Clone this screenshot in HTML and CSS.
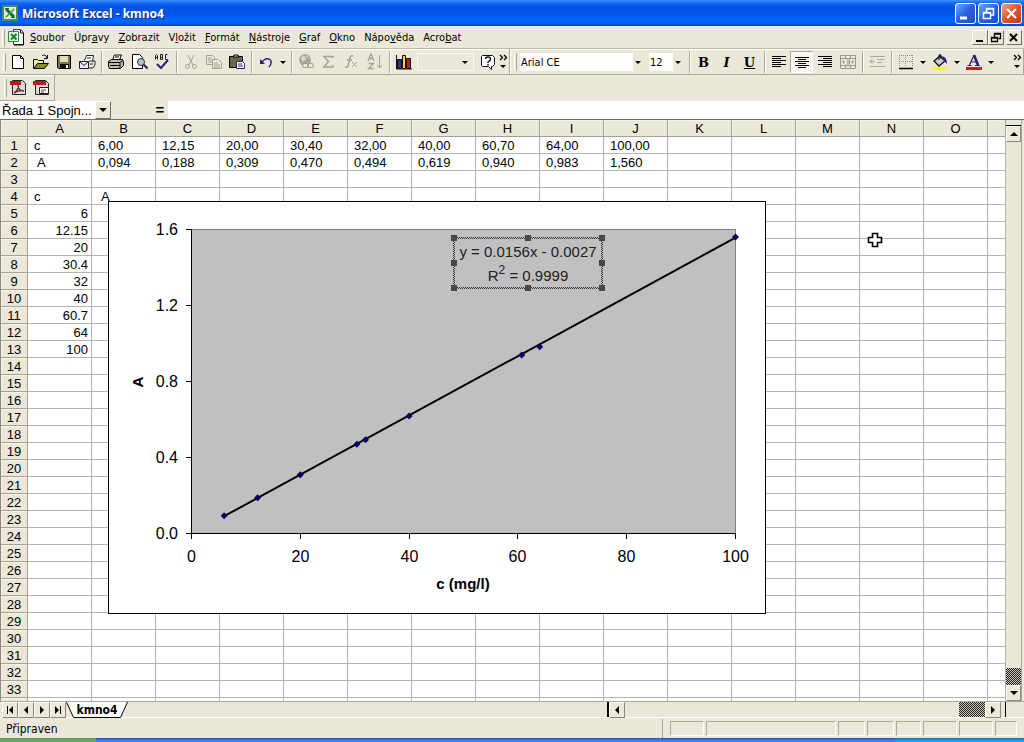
FILE: index.html
```
<!DOCTYPE html>
<html lang="cs">
<head>
<meta charset="utf-8">
<title>Microsoft Excel - kmno4</title>
<link rel="stylesheet" href="styles.css">
</head>
<body>
<header class="titlebar">
  <svg class="app-icon" width="16" height="16" viewBox="0 0 16 16"><path d="M1 1h14v14H1z" fill="#dff0d8" stroke="#4d8a5a" stroke-width="2"/><path d="M4 4l8 8" stroke="#16702c" stroke-width="3"/><path d="M12 4l-8 8" stroke="#3f9350" stroke-width="1.600"/><path d="M3 3.500h4M9 12.500h4" stroke="#16702c"/></svg>
  <h1>Microsoft Excel - kmno4</h1>
  <div class="win-buttons">
    <button class="win" aria-label="Minimize"><svg width="19" height="19"><path d="M4 14h7" stroke="#fff" stroke-width="3"/></svg></button>
    <button class="win" aria-label="Restore"><svg width="19" height="19"><path d="M7.500 8V4.500h7v6.500h-3M7 5h8M4.500 8.500h7v6h-7zM4 9h8" fill="none" stroke="#fff" stroke-width="1.500"/></svg></button>
    <button class="win close" aria-label="Close"><svg width="19" height="19"><path d="M5 5l9 9M14 5l-9 9" stroke="#fff" stroke-width="2.200"/></svg></button>
  </div>
</header>

<nav class="menubar">
  <span class="grip"></span>
  <svg class="doc-icon" width="17" height="17" viewBox="0 0 17 17"><path d="M5.500 .5h7l3 3v12h-10z" fill="#fff" stroke="#333"/><path d="M12.500 1v3h3M15.500 4v12H6" stroke="#000" fill="none"/><path d="M.5 2.500h10v10H.5z" fill="#e4f4df" stroke="#2b8a3a"/><path d="M3 5l5.500 5.500M8.500 5L3 10.500" stroke="#14802b" stroke-width="2"/></svg>
  <button><u>S</u>oubor</button>
  <button>Úpr<u>a</u>vy</button>
  <button><u>Z</u>obrazit</button>
  <button>V<u>l</u>ožit</button>
  <button><u>F</u>ormát</button>
  <button><u>N</u>ástroje</button>
  <button><u>G</u>raf</button>
  <button><u>O</u>kno</button>
  <button>Nápo<u>v</u>ěda</button>
  <button>Acro<u>b</u>at</button>
  <div class="doc-buttons">
    <button class="raised" aria-label="Minimize workbook"><svg width="12" height="11"><path d="M2 9h7" stroke="#000" stroke-width="2"/></svg></button>
    <button class="raised" aria-label="Restore workbook"><svg width="12" height="11"><path d="M4.500 5V1.500h6v5h-2M4 2h7M1.500 5.500h6v4h-6zM1 6h7" fill="none" stroke="#000" stroke-width="1.300"/></svg></button>
    <button class="raised gap" aria-label="Close workbook"><svg width="12" height="11"><path d="M2 2l7 7M9 2l-7 7" stroke="#000" stroke-width="2"/></svg></button>
  </div>
</nav>

<div class="toolbars">
  <div class="toolbar standard">
    <span class="grip"></span>
    <button class="tool" aria-label="New"><svg width="18" height="18"><path d="M3.500 2.500h8l3 3v10h-11z" fill="#fff" stroke="#000"/><path d="M11.500 2.500v3h3" fill="none" stroke="#000"/></svg></button>
    <button class="tool" aria-label="Open"><svg width="18" height="18"><path d="M1.500 15V6.500h4l1 1h5v3" fill="#f5ef8e" stroke="#000"/><path d="M1.500 15.500l4-5h11l-4 5z" fill="#8c8c1c" stroke="#000"/><path d="M10 3c2-2 4-1 5 2M15.500 2v3.500H12" fill="none" stroke="#000"/></svg></button>
    <button class="tool" aria-label="Save"><svg width="18" height="18"><path d="M2.500 2.500h13v13h-12l-1-1z" fill="#7b7b30" stroke="#000"/><path d="M5 3h8v6H5z" fill="#dedec8"/><path d="M5 11h9v4H5z" fill="#111"/><path d="M11 12h2v3h-2z" fill="#fff"/></svg></button>
    <button class="tool" aria-label="Send"><svg width="18" height="18"><path d="M6.500 7.500l2-5h7l-1 6" fill="#fff" stroke="#223"/><path d="M1.500 8.500h9v7h-9z" fill="#e8edf6" stroke="#223"/><path d="M1.500 8.500l4.500 4 4.500-4M11 15h4l2-3V8h-6M12 11h3M9 5h4" fill="none" stroke="#223"/></svg></button>
    <span class="sep"></span>
    <button class="tool" aria-label="Print"><svg width="18" height="18"><path d="M5.500 7l2-5h7l-2 5" fill="#fff" stroke="#000"/><path d="M1.500 8.500l3-2h11l1 2v4l-3 3h-11l-1-2z" fill="#bcbcaa" stroke="#000"/><path d="M2 9.500h11l3-2M13 10v5M3 12.500h10M8 4h4" fill="none" stroke="#000"/><path d="M9 11h3" stroke="#dd0"/></svg></button>
    <button class="tool" aria-label="Print preview"><svg width="18" height="18"><path d="M2.500 1.500h7l3 3v11h-10z" fill="#fff" stroke="#000"/><circle cx="11" cy="9" r="3.500" fill="#a9c4ce" stroke="#333"/><path d="M13.500 11.500l4 4" stroke="#225" stroke-width="2"/></svg></button>
    <button class="tool" aria-label="Spelling"><svg width="18" height="18"><path d="M2.500 6.500V2.500l1-1 1 1v4M2.500 4.500h2M7.500 1.500v5h2v-2h-2 2v-3h-2M14.500 1.500h-2v5h2" fill="none" stroke="#222"/><path d="M4 11l4 4 7-8" fill="none" stroke="#24248c" stroke-width="2"/></svg></button>
    <span class="sep"></span>
    <button class="tool" aria-label="Cut"><svg width="18" height="18" fill="none" stroke="#a5a193"><path d="M6 2l5 10M12 2L7 12"/><circle cx="5.500" cy="13.500" r="2"/><circle cx="12.500" cy="13.500" r="2"/></svg></button>
    <button class="tool" aria-label="Copy"><svg width="18" height="18" fill="#ece8d9" stroke="#a5a193"><path d="M1.500 2.500h6l2 2v7h-8zM3 5h4M3 7h5M3 9h5"/><path d="M7.500 6.500h6l3 3v6h-9zM9 10h4M9 12h6M9 14h6"/></svg></button>
    <button class="tool" aria-label="Paste"><svg width="18" height="18"><path d="M1.500 3.500h13v11h-13z" fill="#6b6848" stroke="#000"/><path d="M5 4l1-2h4l1 2z" fill="#dd8" stroke="#000"/><path d="M8.500 8.500h6l2 2v5h-8z" fill="#fff" stroke="#22227a"/><path d="M10 11h4M10 13h5" stroke="#22227a"/></svg></button>
    <span class="sep"></span>
    <button class="tool" aria-label="Undo"><svg width="18" height="18"><path d="M4 10l3-3c4-3 8 0 7 3q0 2-2 4" fill="none" stroke="#20207a" stroke-width="1.400"/><path d="M3 6v5h5z" fill="#20207a"/></svg></button>
    <button class="drop" aria-label="Undo list"></button>
    <span class="sep"></span>
    <button class="tool" aria-label="Insert link"><svg width="18" height="18"><circle cx="8" cy="7" r="6" fill="#aaa698"/><path d="M4 5l3-2 2 3-3 2zM9 3l3 2" fill="#dad6c8" stroke="#dad6c8"/><rect x="5.500" y="10.500" width="6" height="4" rx="2" fill="#ece8d9" stroke="#999587"/><rect x="10.500" y="10.500" width="6" height="4" rx="2" fill="none" stroke="#999587"/></svg></button>
    <button class="tool" aria-label="AutoSum"><svg width="18" height="18"><path d="M13 5V3.500H4l4.500 5L4 14h9v-2" fill="none" stroke="#a5a193" stroke-width="1.500"/></svg></button>
    <button class="tool" aria-label="Function"><svg width="18" height="18" fill="none" stroke="#a5a193"><path d="M10 3c-3-1-3 2-4 6s-1 6-4 5M4 7h5" stroke-width="1.500"/><path d="M9 9l5 5M14 9l-5 5"/></svg></button>
    <button class="tool" aria-label="Sort"><svg width="18" height="18" fill="none" stroke="#a5a193"><path d="M2 8l3-7 3 7M3 5.500h4M2.500 10.500h5l-5 5h5" stroke-width="1.300"/><path d="M13.500 2v13M11 12l2.500 3 2.500-3"/></svg></button>
    <span class="sep"></span>
    <button class="tool pale" aria-label="Chart wizard"><svg width="18" height="18"><path d="M1.500 2v14H17" fill="none" stroke="#111"/><path d="M2.500 6.500h4v9h-4z" fill="#30308f" stroke="#111"/><path d="M7.500 2.500h3v13h-3z" fill="#f4d53f" stroke="#111"/><path d="M11.500 5.500h4v10h-4z" fill="#b52220" stroke="#111"/></svg></button>
    <label class="combo zoom-box"><select aria-label="Zoom"><option></option></select></label>
    <button class="tool" aria-label="Help"><svg width="18" height="18"><path d="M3.500 2.500h10l2 2v7l-2 2h-1v3l-3-3h-6l-1-1v-9z" fill="#fff" stroke="#111"/><path d="M6.500 6q0-2 2.500-2t2.500 2-2.500 3v1M9 11v1.500" fill="none" stroke="#111" stroke-width="1.400"/></svg></button>
    <button class="more" aria-label="More buttons"><svg width="9" height="18" fill="none" stroke="#000"><path d="M1 2l2.500 2.500L1 7M5 2l2.500 2.500L5 7" stroke-width="1.300"/><path d="M1 12h6l-3 3z" fill="#000" stroke="none"/></svg></button>
  </div>
  <div class="toolbar formatting">
    <span class="grip"></span>
    <label class="combo font-box"><select aria-label="Font"><option>Arial CE</option></select></label>
    <label class="combo size-box"><select aria-label="Font size"><option>12</option></select></label>
    <span class="sep"></span>
    <button class="tool letter"><b>B</b></button>
    <button class="tool letter"><i>I</i></button>
    <button class="tool letter"><u>U</u></button>
    <span class="sep"></span>
    <button class="tool" aria-label="Align left"><svg width="16" height="16" stroke="#000"><path d="M1 2.500h14M1 4.500h9M1 6.500h14M1 8.500h9M1 10.500h14M1 12.500h9"/></svg></button>
    <button class="tool pressed" aria-label="Center"><svg width="16" height="16" stroke="#000"><path d="M1 3.500h14M4 5.500h8M1 7.500h14M4 9.500h8M1 11.500h14M4 13.500h8"/></svg></button>
    <button class="tool" aria-label="Align right"><svg width="16" height="16" stroke="#000"><path d="M1 2.500h14M6 4.500h9M1 6.500h14M6 8.500h9M1 10.500h14M6 12.500h9"/></svg></button>
    <button class="tool" aria-label="Merge and center"><svg width="16" height="16" fill="none" stroke="#9b978a"><path d="M.5 1.500h15v13H.5zM.5 4.500h15M.5 11.500h15M5.500 1.500v3M10.500 1.500v3M5.500 11.500v3M10.500 11.500v3M2 8h3M11 8h3M3.500 6.500v3M12.500 6.500v3M6.500 6h3v4h-3M7 8h2"/></svg></button>
    <span class="sep"></span>
    <button class="tool" aria-label="Decrease indent"><svg width="16" height="16" fill="none" stroke="#aaa698"><path d="M1 2.500h15M8 5.500h7M8 8.500h5M1 12.500h15M1 7.500h5M3.500 5L1 7.500 3.500 10"/></svg></button>
    <span class="sep"></span>
    <button class="tool" aria-label="Borders"><svg width="16" height="16" fill="none" stroke="#8e8b80"><path d="M1 1.500h14M1 7.500h14M1.500 1v12M7.500 1v12M14.500 1v12" stroke-dasharray="1 1"/><path d="M1 14.500h14" stroke="#000" stroke-width="1.500"/></svg></button>
    <button class="drop" aria-label="Border styles"></button>
    <button class="tool" aria-label="Fill colour"><svg width="18" height="18"><path d="M3 8l6-5 5 5-6 5z" fill="#c8ccd8" stroke="#111" stroke-width="1.300"/><path d="M8 7V2q0-1 2 0v4" fill="none" stroke="#111"/><path d="M11 3q5 1 5 8l-3-3z" fill="#26268a"/><path d="M1 14h16v3H1z" fill="#ff0"/></svg></button>
    <button class="drop" aria-label="Fill colours"></button>
    <button class="tool" aria-label="Font colour"><svg width="18" height="18"><path d="M4.500 12L9 2M6 9h5M2.500 12.500h4M10 12.500h5" fill="none" stroke="#24246e" stroke-width="1.200"/><path d="M9 2l4 10" stroke="#24246e" stroke-width="2.600"/><path d="M1 14h16v3H1z" fill="#dc1420"/></svg></button>
    <button class="drop" aria-label="Font colours"></button>
    <button class="more end" aria-label="More formatting buttons"><svg width="9" height="18" fill="none" stroke="#000"><path d="M1 2l2.500 2.500L1 7M5 2l2.500 2.500L5 7" stroke-width="1.300"/><path d="M1 12h6l-3 3z" fill="#000" stroke="none"/></svg></button>
  </div>
</div>

<div class="acrobat-row">
  <div class="toolbar acrobat">
    <span class="grip"></span>
    <button class="tool" aria-label="Convert to PDF"><svg width="17" height="17"><path d="M2.500 1.500h10l3 3v11h-13z" fill="#ddd9d4" stroke="#222"/><path d="M0 2h11v4H0z" fill="#c01722"/><path d="M4 14c4-3 5-6 4-8 0 4 3 6 6 6-4-1-7 0-10 2" fill="none" stroke="#52252a" stroke-width="1.300"/></svg></button>
    <button class="tool" aria-label="Convert and mail"><svg width="17" height="17"><path d="M2.500 1.500h10l3 3v11h-13z" fill="#ddd9d4" stroke="#222"/><path d="M0 2h13v4H0z" fill="#c01722"/><path d="M6.500 8.500h9v6h-9z" fill="#fff" stroke="#222"/><path d="M8 11h5M8 13h3" stroke="#a22"/></svg></button>
  </div>
</div>

<div class="formula-bar">
  <input class="name-box" aria-label="Name box" value="Řada 1 Spojn...">
  <button class="name-drop" aria-label="Names"></button>
  <button class="equals">=</button>
  <input class="formula" aria-label="Formula">
</div>

<main class="workbook">
  <div class="sheet">
    <table class="cells" id="cells"></table>
    <svg class="chart" id="chart" viewBox="108 201 658 413" role="img" aria-label="A / c (mg/l)">
      <defs>
        <pattern id="hatch" width="2" height="2" patternUnits="userSpaceOnUse"><path d="M0 0h1v1H0zM1 1h1v1H1z" fill="#333"/></pattern>
      </defs>
      <rect x="108.500" y="201.500" width="657" height="412" fill="#fff" stroke="#000"/>
      <rect x="191.500" y="229.500" width="544" height="304" fill="#c0c0c0" stroke="#808080"/>
      <path d="M191.500 229v305M191 533.500h545" stroke="#000"/>
      <g id="ticks"></g>
      <g id="series"></g>
      <text class="axis-title" x="463" y="589">c (mg/l)</text>
      <text class="axis-title" transform="translate(143 382) rotate(-90)">A</text>
      <path d="M453 237h150v52H453zM455 239v48h146v-48z" fill="url(#hatch)" fill-rule="evenodd"/>
      <path d="M451 235h6v6h-6zM525 235h6v6h-6zM599 235h6v6h-6zM451 260h6v6h-6zM599 260h6v6h-6zM451 285h6v6h-6zM525 285h6v6h-6zM599 285h6v6h-6z" fill="#484848"/>
      <text class="equation" x="528" y="257">y = 0.0156x - 0.0027</text>
      <text class="equation" x="528" y="281">R<tspan class="sup" dy="-7">2</tspan><tspan dy="7"> = 0.9999</tspan></text>
    </svg>
    <svg class="pointer" width="16" height="16"><path d="M5.500 1.500h5v4h4v5h-4v4h-5v-4h-4v-5h4z" fill="#fff" stroke="#000" stroke-width="1.600"/></svg>
  </div>
  <div class="vscroll">
    <span class="split"></span>
    <button class="arrow-btn" aria-label="Scroll up"><i class="up"></i></button>
    <span class="track"></span>
    <span class="thumb"></span>
    <button class="arrow-btn" aria-label="Scroll down"><i class="down"></i></button>
  </div>
</main>

<div class="tabbar">
  <button class="arrow-btn" aria-label="First sheet"><i class="bar"></i><i class="left"></i></button>
  <button class="arrow-btn" aria-label="Previous sheet"><i class="left"></i></button>
  <button class="arrow-btn" aria-label="Next sheet"><i class="right"></i></button>
  <button class="arrow-btn" aria-label="Last sheet"><i class="right"></i><i class="bar"></i></button>
  <button class="tab"><svg width="62" height="16"><path d="M0 0h62l-7 15.500H7z" fill="#fff"/><path d="M.5 0L7.500 15.500h47L61.500 0" fill="none" stroke="#000"/></svg><span>kmno4</span></button>
  <span class="tab-space"></span>
  <div class="hscroll">
    <button class="arrow-btn" aria-label="Scroll left"><i class="left"></i></button>
    <span class="track"></span>
    <span class="thumb"></span>
    <button class="arrow-btn" aria-label="Scroll right"><i class="right"></i></button>
  </div>
</div>

<footer class="statusbar">
  <span class="message">Připraven</span>
  <div class="panels"><span></span><span></span><span></span><span></span><span></span><span></span><span></span><span></span></div>
</footer>
<div class="taskbar"><span class="start"></span><span class="tasks"></span><span class="tray"></span></div>
<script src="script.js"></script>
</body>
</html>
```
FILE: styles.css
```
* { box-sizing: border-box; }

body {
  margin: 0;
  height: 100vh;
  display: flex;
  flex-direction: column;
  overflow: hidden;
  background: #ece8d9;
  color: #000;
  font: 11px "DejaVu Sans Condensed", "DejaVu Sans", sans-serif;
}

button, input, select {
  font: inherit;
  color: inherit;
  margin: 0;
  padding: 0;
  border: 0;
  background: none;
  border-radius: 0;
  outline: none;
}

svg { display: block; flex: none; }

/* Title bar */
.titlebar {
  flex: none;
  height: 26px;
  display: flex;
  align-items: center;
  padding: 0 2px 0 2px;
  background: linear-gradient(#3c94fb 0, #1668ec 3px, #0054e3 7px, #0056e8 14px, #0366fe 20px, #0262f8 23px, #0242c4 26px);
}
.titlebar h1 {
  flex: 1;
  margin: 0 0 0 4px;
  color: #fff;
  font: bold 12px "Noto Sans", sans-serif;
  text-shadow: 1px 1px 1px #0a2a80;
}
.win-buttons { display: flex; gap: 2px; }
.win {
  width: 21px;
  height: 21px;
  border: 1px solid #fff;
  border-radius: 3px;
  background: linear-gradient(135deg, #7da4f5, #2a5fdf 50%, #1c50cc);
}
.win.close { background: linear-gradient(135deg, #f0a088, #dd5530 50%, #c03a18); }

/* Menu */
.menubar {
  flex: none;
  height: 23px;
  display: flex;
  align-items: center;
  gap: 9px;
  padding: 1px 0 0 2px;
  border-bottom: 1px solid #bdb9a9;
}
.menubar .grip { margin-right: -6px; }
.doc-icon { margin-right: -4px; }
.menubar button { white-space: nowrap; }
.doc-buttons { display: flex; margin-left: auto; padding-right: 2px; }
.raised {
  width: 16px;
  height: 15px;
  padding-left: 1px;
  border: 1px solid;
  border-color: #fff #716f64 #716f64 #fff;
}
.raised.gap { margin-left: 2px; }

.grip { flex: none; width: 3px; height: 18px; border-right: 1px solid #aca899; border-left: 1px solid #fff; }

/* Toolbars */
.toolbars { flex: none; display: flex; height: 26px; }
.toolbar {
  display: flex;
  align-items: center;
  padding-top: 1px;
  border: solid #aca899;
  border-width: 0 1px 1px 0;
  box-shadow: inset 0 1px #fff;
}
.standard { flex: none; padding: 1px 1px 0 3px; }
.formatting { flex: 1; padding-left: 4px; box-shadow: inset 1px 1px #fff; }
.formatting .grip { margin-right: 3px; }
.tool {
  flex: none;
  width: 23px;
  height: 22px;
  display: flex;
  align-items: center;
  justify-content: center;
}
.tool.pressed { background: #f8f6f0; border: 1px solid; border-color: #aca899 #fff #fff #aca899; }
.letter { font: bold 13px "DejaVu Serif", serif; }
.sep { flex: none; width: 6px; height: 22px; background: linear-gradient(90deg, transparent 3px, #aca899 3px, #aca899 4px, #fff 4px, #fff 5px, transparent 5px); }
.drop { flex: none; width: 11px; height: 22px; display: flex; align-items: center; justify-content: center; }
.drop::after, .combo::after, .name-drop::after {
  content: "";
  border: 3px solid transparent;
  border-top-color: #000;
  border-bottom: 0;
}
.combo { flex: none; display: flex; align-items: center; height: 18px; background: #fff; }
.combo::after { margin-right: 5px; }
.combo select { flex: 1; min-width: 0; appearance: none; padding-left: 1px; }
.zoom-box { width: 57px; margin: 0 2px; background: none; border: 1px solid #f9f8f2; }
.font-box { width: 126px; box-shadow: inset -13px 0 #ece8d9; }
.size-box { width: 37px; margin-left: 3px; box-shadow: inset -13px 0 #ece8d9; }
.more { flex: none; width: 9px; }
.more.end { margin: 0 1px 0 auto; }
.acrobat-row { flex: none; height: 26px; display: flex; }
.acrobat { padding: 0 1px 0 4px; }

/* Formula bar */
.formula-bar { flex: none; height: 18px; display: flex; background: #ece8d9; font: 13px "Liberation Sans", Arial, sans-serif; }
.name-box { width: 95px; padding-left: 2px; background: #fff; }
.name-drop {
  width: 16px;
  display: flex;
  align-items: center;
  justify-content: center;
  border: 1px solid;
  border-color: #fff #716f64 #716f64 #fff;
}
.name-drop::after { border-width: 4px 4px 0; }
.equals { width: 16px; margin: 0 0 0 41px; font-weight: bold; font-size: 15px; line-height: 16px; }
.formula { flex: 1; min-width: 0; background: #fff; }

/* Worksheet */
.workbook { flex: 1; min-height: 0; display: flex; border-top: 1px solid #716f64; padding-right: 2px; }
.sheet { flex: 1; min-width: 0; position: relative; overflow: hidden; background: #fff; border-left: 1px solid #8b887b; }
.cells {
  width: 100%;
  table-layout: fixed;
  border-collapse: separate;
  border-spacing: 0;
  font: 13px "Liberation Sans", Arial, sans-serif;
}
.cells col.heading { width: 27px; }
.cells col.letter-col { width: 64px; }
.cells tr { height: 17px; }
.cells th, .cells td {
  height: 17px;
  padding: 1px 3px 0 6px;
  border: solid #b4b4b4;
  border-width: 0 1px 1px 0;
  line-height: 15px;
  font-weight: normal;
  white-space: pre;
  overflow: hidden;
}
.cells th { padding: 1px 0 0; background: #ece8d9; border-color: #a5a293; text-align: center; box-shadow: inset 1px 1px #f6f4ea; }
.cells .num { text-align: right; }
.chart { position: absolute; left: 107px; top: 81px; width: 658px; }
.chart text { font: 16px "Liberation Sans", Arial, sans-serif; text-anchor: middle; }
.chart .y-label { text-anchor: end; }
.chart .axis-title { font-size: 15px; font-weight: bold; }
.chart .equation { font-size: 15px; fill: #222; }
.chart .sup { font-size: 12px; }
.pointer { position: absolute; left: 866px; top: 112px; }

/* Scroll bars */
.vscroll { flex: none; width: 16px; display: flex; flex-direction: column; border-right: 1px solid #aca899; }
.split { height: 6px; border-bottom: 1px solid #000; }
.arrow-btn {
  flex: none;
  width: 16px;
  height: 16px;
  display: flex;
  align-items: center;
  justify-content: center;
  gap: 1px;
  border: 1px solid;
  border-color: #fff #8b887b #8b887b #fff;
  background: #ece8d9;
}
.vscroll .arrow-btn { width: 15px; }
.up, .down, .left, .right { border: 4px solid transparent; }
.up { border-top: 0; border-bottom-color: #000; }
.down { border-bottom: 0; border-top-color: #000; }
.left { border-left: 0; border-right-color: #000; }
.right { border-right: 0; border-left-color: #000; }
.bar { width: 1px; height: 8px; background: #000; }
.track { flex: 1; background: #e9e7d6; }
.thumb { background: repeating-conic-gradient(#222 0 25%, #c8c5b6 0 50%) 0 0 / 2px 2px; }
.vscroll .thumb { height: 17px; }
.hscroll .thumb { width: 26px; }

/* Sheet tabs */
.tabbar { flex: none; height: 17px; display: flex; padding: 0 18px 0 2px; border-top: 1px solid #aca899; border-bottom: 1px solid #fff; background: #e9e6d7; }
.tab { position: relative; flex: none; width: 62px; font-weight: bold; font-size: 12px; }
.tab svg { position: absolute; left: 0; top: 0; }
.tab span { position: relative; }
.tab-space { flex: 482; }
.hscroll { flex: 395; display: flex; border-left: 2px solid #000; border-right: 1px solid #000; padding-right: 4px; }

/* Status bar */
.statusbar { flex: none; height: 20px; display: flex; align-items: center; padding: 1px 5px 0; background: #ece8d9; font-size: 12px; }
.message { flex: 1; line-height: 20px; border-right: 1px solid #aca899; padding-left: 1px; }
.panels { width: 356px; height: 15px; display: grid; grid-template-columns: 34px 130px 27px 27px 25px 34px 34px 22px; gap: 2px; padding-left: 7px; }
.panels span { border: 1px solid; border-color: #aca899 #fff #fff #aca899; }
.taskbar { flex: none; height: 4px; display: flex; }
.start { width: 96px; background: linear-gradient(#5c9a5a, #6cb062); }
.tasks { flex: 1; background: linear-gradient(#1c4bb0 0, #3a80f3 2px); }
.tray { width: 129px; background: linear-gradient(#0c60b8 0, #1aa0f4 2px); }
```
FILE: script.js
```
const NS = 'http://www.w3.org/2000/svg';
const conc = ['6,00', '12,15', '20,00', '30,40', '32,00', '40,00', '60,70', '64,00', '100,00'];
const absorb = ['0,094', '0,188', '0,309', '0,470', '0,494', '0,619', '0,940', '0,983', '1,560'];
const column = ['6', '12.15', '20', '30.4', '32', '40', '60.7', '64', '100'];
const letters = 'ABCDEFGHIJKLMNO'.split('').concat('');

const data = { 1: ['c', ...conc], 2: [' A', ...absorb], 4: ['c', ' A'] };
column.forEach((value, i) => { data[i + 5] = [value]; });

let html = '<colgroup><col class="heading">' + '<col class="letter-col">'.repeat(15) + '<col></colgroup>';
html += '<tr><th></th>' + letters.map(l => `<th scope="col">${l}</th>`).join('') + '</tr>';
for (let row = 1; row <= 34; row++) {
  const values = data[row] || [];
  const kind = row > 4 ? ' class="num"' : '';
  html += `<tr><th scope="row">${row < 34 ? row : ''}</th>` +
    letters.map((_, i) => `<td${kind}>${values[i] || ''}</td>`).join('') + '</tr>';
}
document.getElementById('cells').innerHTML = html;

const xPos = c => 191.5 + c * 5.44;
const yPos = a => 533.5 - a * 190;
function add(parent, name, attrs, text) {
  const el = document.createElementNS(NS, name);
  for (const key in attrs) el.setAttribute(key, attrs[key]);
  if (text) el.textContent = text;
  parent.appendChild(el);
}

const ticks = document.getElementById('ticks');
for (let c = 0; c <= 100; c += 20) {
  const x = Math.floor(xPos(c)) + 0.5;
  add(ticks, 'path', { d: `M${x} 533v6`, stroke: '#000' });
  add(ticks, 'text', { x: x, y: 562 }, String(c));
}
['0.0', '0.4', '0.8', '1.2', '1.6'].forEach(label => {
  const y = yPos(Number(label));
  add(ticks, 'path', { d: `M186 ${y}h6`, stroke: '#000' });
  add(ticks, 'text', { x: 178, y: y + 5.5, class: 'y-label' }, label);
});

const series = document.getElementById('series');
const num = s => Number(s.replace(',', '.'));
add(series, 'path', { d: `M${xPos(6)} ${yPos(0.0909)}L${xPos(100)} ${yPos(1.5573)}`, stroke: '#000', 'stroke-width': 2 });
conc.forEach((c, i) => {
  add(series, 'path', { d: `M${xPos(num(c))} ${yPos(num(absorb[i])) - 3.5}l3.5 3.5-3.5 3.5-3.5-3.5z`, fill: '#000060' });
});
```
